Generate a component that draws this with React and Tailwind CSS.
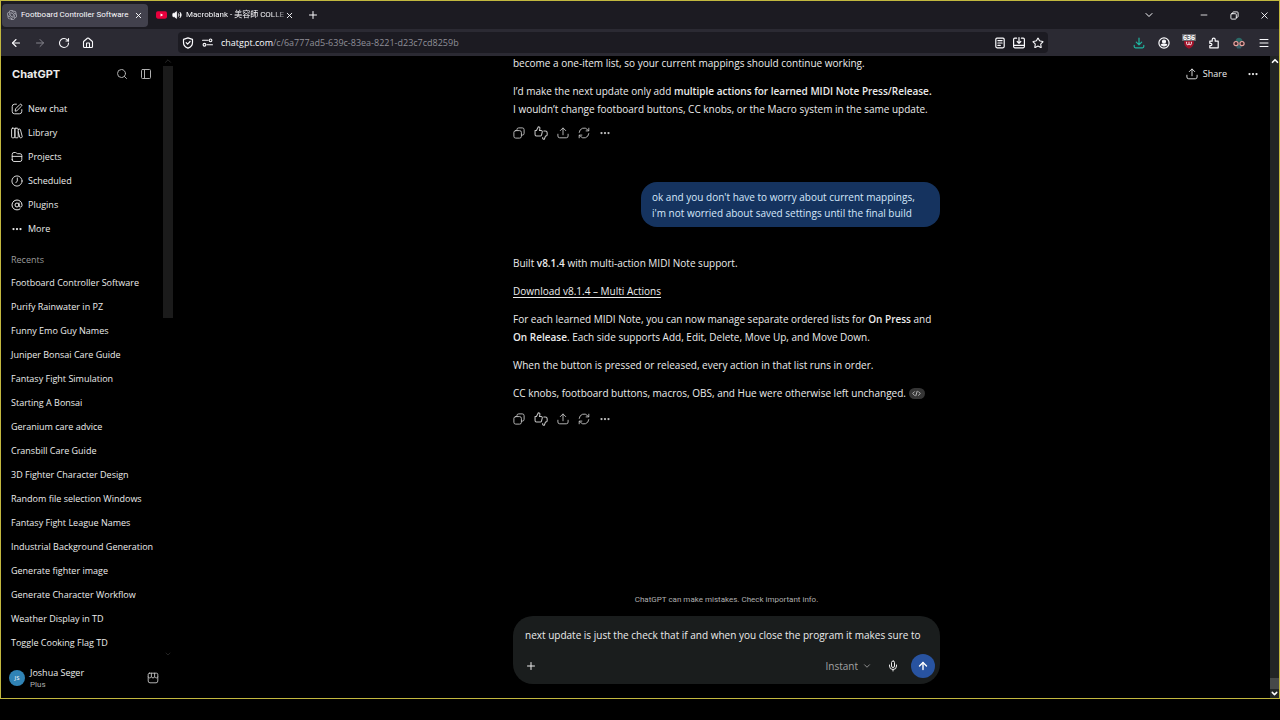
import React, { useState } from 'react';
import {
  ArrowLeft,
  ArrowRight,
  ArrowUp,
  AtSign,
  ChevronDown,
  ChevronUp,
  Ellipsis,
  House,
  Menu,
  Mic,
  Minus,
  PanelLeft,
  Plus,
  RotateCw,
  Search,
  Star,
  Volume2,
  X,
} from 'lucide-react';
import { SiOpenai } from 'react-icons/si';

const recents = [
  'Footboard Controller Software',
  'Purify Rainwater in PZ',
  'Funny Emo Guy Names',
  'Juniper Bonsai Care Guide',
  'Fantasy Fight Simulation',
  'Starting A Bonsai',
  'Geranium care advice',
  'Cransbill Care Guide',
  '3D Fighter Character Design',
  'Random file selection Windows',
  'Fantasy Fight League Names',
  'Industrial Background Generation',
  'Generate fighter image',
  'Generate Character Workflow',
  'Weather Display in TD',
  'Toggle Cooking Flag TD',
];

function Icon({ children, className = 'size-3', strokeWidth = 1.5 }) {
  return (
    <svg
      viewBox="0 0 20 20"
      className={className}
      fill="none"
      stroke="currentColor"
      strokeWidth={strokeWidth}
      strokeLinecap="round"
      strokeLinejoin="round"
      aria-hidden="true"
    >
      {children}
    </svg>
  );
}

const PencilIcon = () => (
  <Icon>
    <path d="M9 2H6a4 4 0 0 0-4 4v8a4 4 0 0 0 4 4h8a4 4 0 0 0 4-4v-3" />
    <path d="M7 13l.5-3.2 7.2-7.2a1.9 1.9 0 0 1 2.7 2.7l-7.2 7.2z" />
  </Icon>
);

const LibraryIcon = () => (
  <Icon>
    <rect x="1" y="2" width="5.5" height="16" rx="1.5" />
    <rect x="6.5" y="2" width="5.5" height="16" rx="1.5" />
    <path d="M12 4.200l2-.8c.8-.3 1.500.1 1.700.9l3 11.700c.2.800-.2 1.400-1 1.600l-1.600.4c-.8.2-1.400-.2-1.600-1L12 8" />
  </Icon>
);

const FolderIcon = () => (
  <Icon>
    <path d="M2 14.500v-9a3 3 0 0 1 3-3h2.500c1.500 0 2 2 3.500 2h4a3 3 0 0 1 3 3v7a3 3 0 0 1-3 3H5a3 3 0 0 1-3-3z" />
    <path d="M2 9h16" />
  </Icon>
);

const ClockIcon = () => (
  <Icon>
    <circle cx="10" cy="10" r="8.5" />
    <path d="M10.500 5v5l-2.500 3" />
  </Icon>
);

const CopyIcon = () => (
  <Icon>
    <rect x="1.5" y="6" width="12.5" height="12.5" rx="3" />
    <path d="M6.500 6V4.500a3 3 0 0 1 3-3h6a3 3 0 0 1 3 3v6a3 3 0 0 1-3 3H14" />
  </Icon>
);

const ThumbsIcon = () => (
  <Icon className="size-[14px]">
    <path d="M1.500 6.500h2L6.200 1c1.800 0 2.500 1.200 2.200 2.700L7.800 6.500h2.400c1.200 0 1.900 1 1.600 2.100l-1.100 4.300c-.2.900-.9 1.400-1.800 1.400H3.500c-1.200 0-2-.8-2-2z" />
    <path d="M14 7h2c1.700 0 2.800 1 2.800 2.500v3c0 1-.7 1.700-1.700 1.700h-.6l-1.800 4.800c-1.800 0-2.600-1-2.300-2.600" />
  </Icon>
);

const ShareIcon = () => (
  <Icon>
    <path d="M10 13V2M5.500 6L10 1.500 14.500 6" />
    <path d="M1.500 12v3a3 3 0 0 0 3 3h11a3 3 0 0 0 3-3v-3" />
  </Icon>
);

const RetryIcon = () => (
  <Icon>
    <path d="M2 9a8 8 0 0 1 14-4.500l1.500 1.500M18 2v4.500h-4.500" />
    <path d="M18 11a8 8 0 0 1-14 4.500L2.500 14M2 18v-4.500h4.500" />
  </Icon>
);

const StoreIcon = () => (
  <Icon>
    <path d="M4 2h12a2 2 0 0 1 2 1.500V8c-.5 2.500-4 2.500-5.300 0-1 2.500-4.400 2.500-5.400 0C6 10.500 2.500 10.500 2 8V3.500A2 2 0 0 1 4 2z" />
    <path d="M7.300 2v6M12.700 2v6M2 8v7a3 3 0 0 0 3 3h10a3 3 0 0 0 3-3V8" />
  </Icon>
);

const navItems = [
  { label: 'New chat', icon: <PencilIcon /> },
  { label: 'Library', icon: <LibraryIcon /> },
  { label: 'Projects', icon: <FolderIcon /> },
  { label: 'Scheduled', icon: <ClockIcon /> },
  { label: 'Plugins', icon: <AtSign className="size-3" strokeWidth={2} /> },
  { label: 'More', icon: <Ellipsis className="size-3" strokeWidth={2.5} /> },
];

function TabStrip() {
  return (
    <div className="flex h-7 shrink-0 items-center bg-[#1c1b22] pl-px text-[#fbfbfe]">
      <div className="flex h-[23px] w-[146px] items-center rounded bg-[#42414d] pl-[5px] pr-1">
        <SiOpenai className="size-[10px] shrink-0 text-[#b4b4be]" />
        <span className="ml-1 flex-1 whitespace-nowrap font-[Roboto] text-[8px]">Footboard Controller Software</span>
        <button aria-label="Close tab" className="flex size-3 items-center justify-center">
          <X className="size-[9px]" strokeWidth={2.5} />
        </button>
      </div>
      <div className="flex h-[23px] w-[146px] items-center pl-2">
        <svg viewBox="0 0 12 8" className="h-2 w-[11px] shrink-0" aria-hidden="true">
          <rect width="12" height="8" rx="2" fill="#e8003d" />
          <path d="M5 2.300L7.800 4 5 5.700z" fill="#fff" />
        </svg>
        <Volume2 className="ml-[5px] size-[10px] shrink-0 fill-current" strokeWidth={2} />
        <span className="ml-1 flex-1 whitespace-nowrap font-['Roboto','Noto_Sans_CJK_JP',sans-serif] text-[8px] [mask-image:linear-gradient(to_right,black_85%,#0006)]">
          Macroblank - 美容師 COLLE
        </span>
        <button aria-label="Close tab" className="flex h-3 w-[9px] items-center justify-center">
          <X className="size-[9px]" strokeWidth={2.5} />
        </button>
      </div>
      <button aria-label="New tab" className="ml-[13px]">
        <Plus className="size-3" strokeWidth={2} />
      </button>
      <div className="ml-auto flex items-center pr-[9px]">
        <button aria-label="List all tabs" className="mr-11">
          <ChevronDown className="size-3" strokeWidth={2} />
        </button>
        <button aria-label="Minimize" className="mr-[21px]">
          <Minus className="size-[10px]" strokeWidth={2} />
        </button>
        <button aria-label="Restore" className="mr-5">
          <Icon className="size-[9px]" strokeWidth={2}>
            <rect x="2" y="6" width="12" height="12" rx="2" />
            <path d="M6 6V4a2 2 0 0 1 2-2h8a2 2 0 0 1 2 2v8a2 2 0 0 1-2 2h-2" />
          </Icon>
        </button>
        <button aria-label="Close">
          <X className="size-[11px]" strokeWidth={2} />
        </button>
      </div>
    </div>
  );
}

function Toolbar() {
  return (
    <div className="flex h-[27px] shrink-0 items-center bg-[#2b2a33] px-[9px] text-[#fbfbfe]">
      <div className="flex w-[168px] items-center gap-3">
        <button aria-label="Back"><ArrowLeft className="size-3" strokeWidth={2.2} /></button>
        <button aria-label="Forward" className="text-[#85848d]"><ArrowRight className="size-3" strokeWidth={2} /></button>
        <button aria-label="Reload"><RotateCw className="size-3" strokeWidth={2.2} /></button>
        <button aria-label="Home"><House className="size-3" strokeWidth={2.2} /></button>
      </div>
      <div className="flex h-[21px] flex-1 items-center rounded bg-[#1c1b22] px-1">
        <Icon className="size-3 shrink-0" strokeWidth={2}>
          <path d="M10 1.500l7.500 2.500v5c0 5-3.500 8-7.500 9.500C6 17 2.500 14 2.500 9V4z" />
          <path d="M7 9.500l2.300 2.300L13.500 7.500" />
        </Icon>
        <Icon className="ml-2 size-[11px] shrink-0" strokeWidth={2}>
          <path d="M1 6h10M9 14h10" />
          <circle cx="15.500" cy="6" r="2.500" />
          <circle cx="4.500" cy="14" r="2.500" />
        </Icon>
        <div className="ml-2 flex-1 text-[9px] text-[#8f8f98]">
          <span className="text-[#fbfbfe]">chatgpt.com</span>/c/6a777ad5-639c-83ea-8221-d23c7cd8259b
        </div>
        <div className="flex items-center gap-[7px]">
          <button aria-label="Reader view">
            <Icon className="size-3" strokeWidth={2}>
              <rect x="3" y="2" width="14" height="16" rx="2" />
              <path d="M6.500 6h7M6.500 10h7M6.500 14h4" />
            </Icon>
          </button>
          <button aria-label="Install page">
            <Icon className="size-3" strokeWidth={2}>
              <path d="M6 2H3a2 2 0 0 0-2 2v12a2 2 0 0 0 2 2h14a2 2 0 0 0 2-2V4a2 2 0 0 0-2-2h-3M1 14h18M10 1v9M7 7.500l3 3 3-3" />
            </Icon>
          </button>
          <button aria-label="Bookmark"><Star className="size-3" strokeWidth={2.2} /></button>
        </div>
      </div>
      <div className="ml-[85px] flex items-center gap-[13px]">
        <button aria-label="Downloads" className="text-[#1fb5a0]">
          <Icon className="size-3" strokeWidth={2}>
            <path d="M10 2v11M5.500 8.500L10 13l4.500-4.500M2 14v2a2 2 0 0 0 2 2h12a2 2 0 0 0 2-2v-2" />
          </Icon>
        </button>
        <button aria-label="Account">
          <Icon className="size-3" strokeWidth={2}>
            <circle cx="10" cy="10" r="8.5" />
            <circle cx="10" cy="7.5" r="2.5" fill="currentColor" />
            <path d="M5.500 13c1-1.500 8-1.500 9 0-1.500 2.500-7.500 2.500-9 0z" fill="currentColor" />
          </Icon>
        </button>
        <button aria-label="uBlock Origin" className="relative">
          <svg viewBox="0 0 20 20" className="size-3" aria-hidden="true">
            <path d="M10 1l8 3v6c0 5-4 7.500-8 9.500C6 17.500 2 15 2 10V4z" fill="#a3122a" />
            <path d="M6 8v3a2 2 0 0 0 4 0V8m0 3a2 2 0 0 0 4 0V8" fill="none" stroke="#fff" strokeWidth="1.5" />
          </svg>
          <span className="absolute -left-px -top-[3px] bg-[#6b6b70] px-px text-[7px] font-bold leading-[7px] text-white">636</span>
        </button>
        <button aria-label="Extensions">
          <Icon className="size-3" strokeWidth={2}>
            <path d="M3 7h4V4.500a2.500 2.500 0 0 1 5 0V7h5v11H3v-3.500h1.500a2 2 0 0 0 0-4H3z" />
          </Icon>
        </button>
        <button aria-label="Private mask">
          <svg viewBox="0 0 20 20" className="size-3" aria-hidden="true">
            <path d="M4 8c0-9 12-9 12 0z" fill="#2b6a67" />
            <path d="M4 13h12l-3 6H7z" fill="#345f68" />
            <circle cx="5" cy="11" r="3.5" fill="#3a2227" stroke="#e9a5a0" strokeWidth="2" />
            <circle cx="15" cy="11" r="3.5" fill="#3a2227" stroke="#e9a5a0" strokeWidth="2" />
          </svg>
        </button>
        <button aria-label="Menu"><Menu className="size-3" strokeWidth={2} /></button>
      </div>
    </div>
  );
}

function Sidebar() {
  return (
    <aside className="flex w-[172px] shrink-0 flex-col text-[#ececec]">
      <div className="flex min-h-0 flex-1">
        <div className="min-w-0 flex-1 overflow-hidden">
          <div className="flex h-9 items-center px-[11px]">
            <h1 className="flex-1 font-[Inter] text-[11px] font-bold">ChatGPT</h1>
            <button aria-label="Search chats" className="text-[#afafaf]"><Search className="size-3" strokeWidth={2} /></button>
            <button aria-label="Close sidebar" className="ml-3 text-[#afafaf]"><PanelLeft className="size-3" strokeWidth={2} /></button>
          </div>
          <nav className="mt-[5px] pl-[10px] text-[9px]">
            {navItems.map(({ label, icon }) => (
              <a key={label} href="#" className="flex h-6 items-center gap-[5px]">
                {icon}
                {label}
              </a>
            ))}
          </nav>
          <h2 className="mt-2 h-[22px] pl-[10px] text-[9px] leading-[22px] text-[#9b9b9b]">Recents</h2>
          <ul className="pl-[10px] text-[9px]">
            {recents.map((title) => (
              <li key={title}>
                <a href="#" className="block h-6 whitespace-nowrap leading-6">{title}</a>
              </li>
            ))}
          </ul>
        </div>
        <div className="flex w-[10px] flex-col items-center text-[#333333]">
          <ChevronUp className="size-[10px]" strokeWidth={2} />
          <div className="h-[252px] w-full bg-[#1b1b1b]" />
          <ChevronDown className="mt-auto size-2" strokeWidth={2} />
        </div>
      </div>
      <div className="flex h-10 shrink-0 items-center pl-2 pr-[14px]">
        <span className="flex size-4 items-center justify-center rounded-full bg-[#3083b5] text-[6px] text-white">JS</span>
        <div className="ml-[5px] flex-1">
          <div className="text-[9px] leading-[13px]">Joshua Seger</div>
          <div className="font-[Roboto] text-[8px] leading-[11px] text-[#afafaf]">Plus</div>
        </div>
        <button aria-label="Apps" className="text-[#c4c4c4]"><StoreIcon /></button>
      </div>
    </aside>
  );
}

function MessageActions() {
  return (
    <div className="flex h-[18px] items-center gap-[9px] text-[#c4c4c4]">
      <button aria-label="Copy"><CopyIcon /></button>
      <button aria-label="Rate response"><ThumbsIcon /></button>
      <button aria-label="Share"><ShareIcon /></button>
      <button aria-label="Try again"><RetryIcon /></button>
      <button aria-label="More actions"><Ellipsis className="size-3" strokeWidth={2.5} /></button>
    </div>
  );
}

function Composer() {
  const [draft, setDraft] = useState('next update is just the check that if and when you close the program it makes sure to');

  return (
    <form className="rounded-[20px] bg-[#1a1d1d] pb-[6px] pl-3 pr-[5px] pt-[10px]" onSubmit={(e) => e.preventDefault()}>
      <textarea
        aria-label="Message ChatGPT"
        rows={1}
        value={draft}
        onChange={(e) => setDraft(e.target.value)}
        className="block h-[18px] w-full resize-none overflow-hidden whitespace-nowrap bg-transparent text-[10px] leading-[18px] text-[#ececec] outline-none"
      />
      <div className="mt-[10px] flex h-6 items-center">
        <button type="button" aria-label="Add files"><Plus className="size-3" strokeWidth={2} /></button>
        <div className="ml-auto flex items-center gap-1 text-[#a3a3a3]">
          <select aria-label="Model" className="appearance-none bg-transparent text-[10px] leading-4 outline-none [field-sizing:content]">
            <option>Instant</option>
          </select>
          <ChevronDown className="size-[10px]" strokeWidth={2} />
        </div>
        <button type="button" aria-label="Dictate" className="ml-[15px]"><Mic className="size-3" strokeWidth={2} /></button>
        <button type="submit" aria-label="Send" className="ml-3 flex size-6 items-center justify-center rounded-full bg-[#2853a0] text-white">
          <ArrowUp className="size-3" strokeWidth={2.8} />
        </button>
      </div>
    </form>
  );
}

function Chat() {
  return (
    <main className="relative flex min-w-0 flex-1 flex-col pl-[10px] text-[#ececec]">
      {/* Floating header buttons */}
      <div className="absolute right-[11px] top-0 flex h-9 items-center text-[9px]">
        <button className="flex items-center gap-[5px]"><ShareIcon />Share</button>
        <button aria-label="Conversation options" className="ml-5"><Ellipsis className="size-3" strokeWidth={2.5} /></button>
      </div>

      {/* Conversation, scrolled to the end */}
      <div className="flex min-h-0 flex-1 flex-col justify-end overflow-hidden pb-[164px]">
        <div className="mx-auto w-[427px] text-[10px]">
          <div className="mb-[6px] space-y-[10px] whitespace-nowrap leading-[18px]">
            <p>become a one-item list, so your current mappings should continue working.</p>
            <p>
              I’d make the next update only add <strong className="font-semibold">multiple actions for learned MIDI Note Press/Release.</strong>
              <br />
              I wouldn’t change footboard buttons, CC knobs, or the Macro system in the same update.
            </p>
          </div>
          <MessageActions />

          <div className="mt-10 flex justify-end">
            <p className="w-[299px] whitespace-nowrap rounded-[16px] bg-[#15335f] px-[11px] pb-[6px] pt-[7px] leading-4 text-[#d5e8fb]">
              ok and you don't have to worry about current mappings,
              <br />
              i'm not worried about saved settings until the final build
            </p>
          </div>

          <div className="mb-2 mt-[27px] space-y-[10px] whitespace-nowrap leading-[18px]">
            <p>Built <strong className="font-semibold">v8.1.4</strong> with multi-action MIDI Note support.</p>
            <p><a href="#" className="underline underline-offset-2">Download v8.1.4 – Multi Actions</a></p>
            <p>
              For each learned MIDI Note, you can now manage separate ordered lists for <strong className="font-semibold">On Press</strong> and
              <br />
              <strong className="font-semibold">On Release</strong>. Each side supports Add, Edit, Delete, Move Up, and Move Down.
            </p>
            <p>When the button is pressed or released, every action in that list runs in order.</p>
            <p className="flex items-center gap-[3px]">
              CC knobs, footboard buttons, macros, OBS, and Hue were otherwise left unchanged.
              <button aria-label="View source" className="flex h-[11px] w-4 items-center justify-center rounded-full bg-[#353535] text-[#c4c4c4]">
                <Icon className="size-[9px]" strokeWidth={2}>
                  <path d="M5.500 6L1.500 10l4 4M14.500 6l4 4-4 4M11.500 5l-3 10" />
                </Icon>
              </button>
            </p>
          </div>
          <MessageActions />
        </div>
      </div>

      <div className="mx-auto w-[427px] shrink-0 pb-[14px]">
        <p className="mb-2 text-center font-[Roboto] text-[8px] leading-4 text-[#afafaf]">ChatGPT can make mistakes. Check important info.</p>
        <Composer />
      </div>
    </main>
  );
}

export default function App() {
  return (
    <div className="flex h-screen flex-col bg-black pb-[21px] font-['Open_Sans','Noto_Sans_CJK_JP',sans-serif]">
      <div className="flex min-h-0 flex-1 flex-col border border-[#c2b83f]">
        <TabStrip />
        <Toolbar />
        <div className="flex min-h-0 flex-1 bg-black">
          <Sidebar />
          <Chat />
          {/* Page scrollbar */}
          <div className="flex w-[9px] shrink-0 flex-col items-center bg-[#222525] text-white">
            <ChevronUp className="size-[10px]" strokeWidth={4} />
            <div className="mt-auto h-[11px] w-full bg-[#464949]" />
            <ChevronDown className="size-[9px]" strokeWidth={4} />
          </div>
        </div>
      </div>
    </div>
  );
}
